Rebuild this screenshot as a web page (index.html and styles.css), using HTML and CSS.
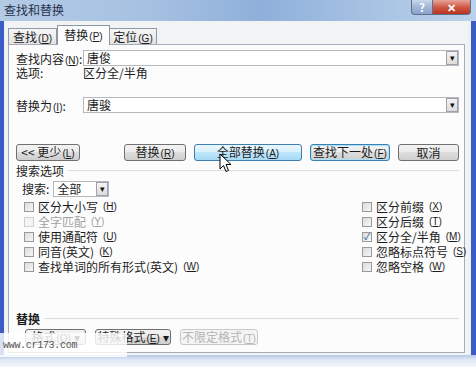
FILE: index.html
```html
<!DOCTYPE html>
<html lang="zh-CN">
<head>
    <meta charset="UTF-8">
    <title>查找和替换</title>
    <link rel="stylesheet" href="styles.css">
</head>
<body>
    <div class="window">
        <div class="titlebar">
            <span class="title">查找和替换</span>
            <div class="caption-btns">
                <span class="cap help">?</span>
                <span class="cap close">✕</span>
            </div>
        </div>
        <div class="frame">
            <div class="client">
                <div class="tabs">
                    <div class="tab">查找<span class="key">(<u>D</u>)</span></div>
                    <div class="tab active">替换<span class="key">(<u>P</u>)</span></div>
                    <div class="tab">定位<span class="key">(<u>G</u>)</span></div>
                </div>
                <div class="panel">
                    <div class="field-row first">
                        <span class="label">查找内容<span class="key">(<u>N</u>)</span>:</span>
                        <div class="combo"><span class="combo-text">唐俊</span><span class="drop">▾</span></div>
                    </div>
                    <div class="text-row">
                        <span class="label">选项:</span>
                        <span>区分全/半角</span>
                    </div>
                    <div class="field-row replace">
                        <span class="label">替换为<span class="key">(<u>I</u>)</span>:</span>
                        <div class="combo"><span class="combo-text">唐骏</span><span class="drop">▾</span></div>
                    </div>

                    <div class="btn-row">
                        <button class="btn w-less">&lt;&lt; 更少<span class="key">(<u>L</u>)</span></button>
                        <button class="btn w-rep">替换<span class="key">(<u>R</u>)</span></button>
                        <button class="btn w-all hot">全部替换<span class="key">(<u>A</u>)</span></button>
                        <button class="btn w-next default">查找下一处<span class="key">(<u>F</u>)</span></button>
                        <button class="btn w-cancel">取消</button>
                    </div>

                    <div class="group-title"><span>搜索选项</span><span class="rule"></span></div>
                    <div class="search-row">
                        <span>搜索:</span>
                        <div class="select"><span class="combo-text">全部</span><span class="drop">▾</span></div>
                    </div>

                    <div class="options">
                        <div class="opt-col">
                            <label class="opt"><span class="box"></span>区分大小写<span class="key">(<u>H</u>)</span></label>
                            <label class="opt disabled"><span class="box"></span>全字匹配<span class="key">(<u>Y</u>)</span></label>
                            <label class="opt"><span class="box"></span>使用通配符<span class="key">(<u>U</u>)</span></label>
                            <label class="opt"><span class="box"></span>同音(英文)<span class="key">(<u>K</u>)</span></label>
                            <label class="opt"><span class="box"></span>查找单词的所有形式(英文)<span class="key">(<u>W</u>)</span></label>
                        </div>
                        <div class="opt-col">
                            <label class="opt"><span class="box"></span>区分前缀<span class="key">(<u>X</u>)</span></label>
                            <label class="opt"><span class="box"></span>区分后缀<span class="key">(<u>T</u>)</span></label>
                            <label class="opt"><span class="box checked">✓</span>区分全/半角<span class="key">(<u>M</u>)</span></label>
                            <label class="opt"><span class="box"></span>忽略标点符号<span class="key">(<u>S</u>)</span></label>
                            <label class="opt"><span class="box"></span>忽略空格<span class="key">(<u>W</u>)</span></label>
                        </div>
                    </div>

                    <div class="group-title lower"><span>替换</span><span class="rule"></span></div>
                    <div class="fmt-row">
                        <button class="btn small w-fmt">格式<span class="key">(<u>O</u>)</span> ▾</button>
                        <button class="btn small w-special">特殊格式<span class="key">(<u>E</u>)</span> ▾</button>
                        <button class="btn small w-nofmt" disabled>不限定格式<span class="key">(<u>T</u>)</span></button>
                    </div>
                </div>
            </div>
        </div>
        <div class="frame-bottom"></div>

        <div class="watermark">www.cr173.com</div>
        <svg class="cursor" width="13" height="20" viewBox="0 0 13 20">
            <path d="M1 1 L1 16 L4.5 12.5 L7 18.5 L9.5 17.5 L7 11.5 L12 11.5 Z" fill="#fff" stroke="#000" stroke-width="1" stroke-linejoin="round"/>
        </svg>
    </div>
</body>
</html>
```

FILE: styles.css
```css
* {
    box-sizing: border-box;
}
body {
    margin: 0;
    font-family: "Noto Sans CJK SC", "Liberation Sans", sans-serif;
    font-size: 12px;
    color: #1c1c1c;
    background: #fff;
    white-space: nowrap;
}
.key {
    font-family: "Liberation Sans", sans-serif;
    font-size: 10px;
    margin-left: 1px;
}
.window {
    position: relative;
    width: 476px;
    height: 367px;
    background: linear-gradient(180deg, #b8cfe9 0%, #a9c3e4 40%, #c3d6ee 100%);
    overflow: hidden;
}
.titlebar {
    height: 21px;
    display: flex;
    align-items: flex-start;
    justify-content: space-between;
    padding-left: 4px;
    background: linear-gradient(90deg, #b4cbe6 0%, #a7c1e2 30%, #8fb0da 55%, #a9c4e4 80%, #bcd1ea 100%);
}
.title {
    line-height: 20px;
    font-size: 12px;
    color: #26324a;
}
.caption-btns {
    display: flex;
    margin-right: 5px;
}
.cap {
    height: 15px;
    display: flex;
    align-items: center;
    justify-content: center;
    color: #fff;
    font-size: 11px;
    font-weight: bold;
    border: 1px solid #5d6f8a;
    border-top: none;
}
.help {
    width: 22px;
    border-radius: 0 0 0 4px;
    background: linear-gradient(180deg, #c8d8ec 0%, #9fb6d6 50%, #8aa5cc 100%);
}
.close {
    width: 38px;
    border-left: none;
    border-radius: 0 0 4px 0;
    background: linear-gradient(180deg, #e8a49a 0%, #cf5a47 50%, #b8321f 100%);
}
.frame {
    height: 334px;
    border-left: 4px solid #3b5cc6;
    border-right: 5px solid #3a5ac4;
    padding: 0 3px 0 2px;
    background: #eef0f3;
}
.client {
    height: 100%;
    padding-top: 4px;
    background: #f2f3f5;
}
.frame-bottom {
    height: 12px;
    background: linear-gradient(180deg, #b5c9e8 0%, #dfe8f5 40%, #f4f7fb 100%);
}
.tabs {
    display: flex;
    align-items: flex-end;
    height: 19px;
    padding-left: 2px;
    position: relative;
    z-index: 1;
}
.tab {
    height: 16px;
    line-height: 15px;
    padding: 0 3px;
    text-align: center;
    border: 1px solid #8d9aa8;
    border-bottom: none;
    background: linear-gradient(180deg, #f6f6f6 0%, #e4e4e4 100%);
}
.tab:first-child {
    width: 49px;
}
.tab.active {
    width: 53px;
    height: 20px;
    line-height: 17px;
    margin-bottom: -1px;
    background: #fcfcfc;
    border-color: #8996a6;
}
.tab:last-child {
    width: 47px;
    border-left: none;
}
.panel {
    margin-left: 2px;
    width: 457px;
    height: 309px;
    border: 1px solid #a4adb8;
    background: #fcfcfc;
    padding: 5px 5px 0 7px;
}
.field-row {
    display: flex;
    align-items: center;
    height: 16px;
}
.field-row.replace {
    margin-top: 18px;
}
.label {
    width: 67px;
    flex: none;
}
.combo, .select {
    flex: 1;
    height: 16px;
    border: 1px solid #b5b8bd;
    background: #fff;
    display: flex;
    align-items: center;
    justify-content: space-between;
    padding-left: 3px;
}
.combo-text {
    line-height: 14px;
}
.drop {
    width: 12px;
    height: 14px;
    border: 1px solid #9ca3ab;
    background: linear-gradient(180deg, #f4f4f4, #dcdcdc);
    font-size: 9px;
    line-height: 12px;
    text-align: center;
    color: #111;
}
.text-row {
    display: flex;
    height: 12px;
    line-height: 12px;
    margin-top: 1px;
}
.btn-row {
    display: flex;
    gap: 8px;
    margin-top: 31px;
}
.btn {
    height: 17px;
    padding: 0;
    font-family: inherit;
    font-size: 12px;
    line-height: 14px;
    color: #1c1c1c;
    white-space: nowrap;
    border: 1px solid #707070;
    border-radius: 3px;
    background: linear-gradient(180deg, #f3f3f3 0%, #ebebeb 49%, #dddddd 50%, #cfcfcf 100%);
}
.w-less { width: 64px; margin-right: 36px; }
.w-rep { width: 62px; }
.w-all { width: 108px; }
.w-next { width: 80px; }
.w-cancel { width: 61px; }
.btn.hot {
    border-color: #3c7fb1;
    background: linear-gradient(180deg, #eaf6fd 0%, #d9f0fc 49%, #bee6fd 50%, #a7d9f5 100%);
}
.btn.default {
    border-color: #3c7fb1;
    box-shadow: inset 0 0 0 1px #a7e0f8;
}
.group-title {
    display: flex;
    align-items: center;
    height: 14px;
    margin-top: 2px;
}
.group-title .rule {
    flex: 1;
    height: 1px;
    margin-left: 4px;
    background: #d5dfe5;
}
.group-title.lower {
    margin-top: 37px;
    font-weight: bold;
}
.search-row {
    display: flex;
    align-items: center;
    gap: 4px;
    margin-top: 3px;
    padding-left: 6px;
}
.select {
    flex: none;
    width: 56px;
}
.options {
    display: grid;
    grid-template-columns: 338px auto;
    margin-top: 2px;
    padding-left: 8px;
}
.opt-col {
    display: flex;
    flex-direction: column;
}
.opt {
    display: flex;
    align-items: center;
    height: 15px;
    gap: 4px;
}
.opt.disabled {
    color: #a2a2a2;
}
.box {
    width: 10px;
    height: 10px;
    flex: none;
    border: 1px solid #9a9a9a;
    background: linear-gradient(135deg, #dcdcdc, #f6f6f6);
    font-size: 9px;
    line-height: 8px;
    text-align: center;
    color: #1c4f9a;
}
.opt.disabled .box {
    border-color: #cfcfcf;
    background: #f4f4f4;
}
.fmt-row {
    display: flex;
    gap: 9px;
    margin-top: 4px;
    padding-left: 9px;
}
.btn.small {
    height: 16px;
    line-height: 13px;
}
.w-fmt { width: 61px; }
.w-special { width: 76px; }
.w-nofmt { width: 78px; }
.btn[disabled] {
    color: #b5b5b5;
    border-color: #c8c8c8;
    background: #f4f4f4;
}
.watermark {
    position: absolute;
    left: 0;
    top: 333px;
    width: 127px;
    height: 24px;
    background: rgba(255, 255, 255, 0.82);
    padding: 7px 0 0 3px;
    font-family: "Liberation Mono", monospace;
    font-size: 10px;
    line-height: 12px;
    letter-spacing: -0.3px;
    color: #555;
}
.cursor {
    position: absolute;
    left: 219px;
    top: 153px;
}
```
